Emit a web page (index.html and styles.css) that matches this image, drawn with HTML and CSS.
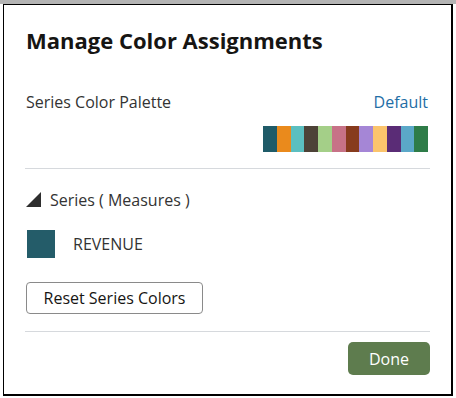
FILE: index.html
```html
<!DOCTYPE html>
<html lang="en">
<head>
    <meta charset="UTF-8">
    <meta name="viewport" content="width=device-width, initial-scale=1.0">
    <title>Manage Color Assignments</title>
    <link rel="stylesheet" href="styles.css">
</head>
<body>
    <div class="page-edge"></div>
    <div class="dialog">
        <h1>Manage Color Assignments</h1>

        <div class="palette-row">
            <span class="label">Series Color Palette</span>
            <a class="link" href="#">Default</a>
        </div>
        <div class="palette">
            <span style="background:#1f5b68"></span>
            <span style="background:#ea8a1c"></span>
            <span style="background:#5bbfc0"></span>
            <span style="background:#4d4237"></span>
            <span style="background:#a4cf88"></span>
            <span style="background:#c77287"></span>
            <span style="background:#873b1d"></span>
            <span style="background:#a586d6"></span>
            <span style="background:#fbc46c"></span>
            <span style="background:#5a2c76"></span>
            <span style="background:#5ba8c8"></span>
            <span style="background:#2e7c48"></span>
        </div>

        <hr class="divider">

        <div class="section-title">
            <svg class="caret" width="15" height="15" viewBox="0 0 15 15">
                <polygon points="0,15 15,15 15,0" fill="#2e2e2e"/>
            </svg>
            <span>Series ( Measures )</span>
        </div>

        <div class="series-item">
            <span class="swatch"></span>
            <span>REVENUE</span>
        </div>

        <button class="btn-reset" type="button">Reset Series Colors</button>

        <hr class="divider divider-bottom">

        <div class="footer">
            <button class="btn-done" type="button">Done</button>
        </div>
    </div>
</body>
</html>
```

FILE: styles.css
```css
* {
    box-sizing: border-box;
    margin: 0;
    padding: 0;
}

body {
    background: #fff;
    font-family: 'Open Sans', 'Liberation Sans', sans-serif;
    color: #333;
    width: 456px;
    height: 398px;
    overflow: hidden;
}

.page-edge {
    height: 4px;
    background: #b4b4b4;
}

.dialog {
    width: 450px;
    height: 392px;
    margin-left: 3px;
    border: 1px solid #000;
    border-right-width: 2px;
    border-bottom-width: 2px;
    padding: 20px 21px 0 21px;
    background: #fff;
}

h1 {
    font-size: 22px;
    font-weight: 700;
    color: #161513;
    line-height: 30px;
    margin-left: 1px;
}

.palette-row {
    display: flex;
    justify-content: space-between;
    align-items: center;
    margin-top: 37px;
    font-size: 16px;
    line-height: 20px;
}

.label {
    margin-left: 1px;
}

.link {
    color: #1f6ea6;
    text-decoration: none;
    margin-right: 2px;
}

.palette {
    display: flex;
    justify-content: flex-end;
    margin-top: 14px;
    margin-right: 2px;
}

.palette span {
    width: 13.75px;
    height: 26px;
}

.divider {
    border: none;
    border-top: 1px solid #d6d9dd;
    margin-top: 16px;
}

.divider-bottom {
    margin-top: 17px;
}

.section-title {
    display: flex;
    align-items: center;
    gap: 9px;
    margin-top: 21px;
    font-size: 16px;
    line-height: 20px;
}

.caret {
    margin-left: 1px;
    margin-bottom: 1px;
}

.series-item {
    display: flex;
    align-items: center;
    gap: 18px;
    margin-top: 20px;
    font-size: 16px;
}

.swatch {
    width: 28px;
    height: 28px;
    margin-left: 2px;
    background: #245c69;
}

.btn-reset {
    display: block;
    margin-top: 24px;
    margin-left: 1px;
    width: 177px;
    height: 32px;
    border: 1px solid #8a8a8a;
    border-radius: 4px;
    background: #fff;
    font-family: inherit;
    font-size: 16px;
    color: #161513;
}

.footer {
    display: flex;
    justify-content: flex-end;
    margin-top: 10px;
}

.btn-done {
    width: 82px;
    height: 33px;
    border: none;
    border-radius: 5px;
    background: #5e7c4e;
    color: #fff;
    font-family: inherit;
    font-size: 16px;
}
```
